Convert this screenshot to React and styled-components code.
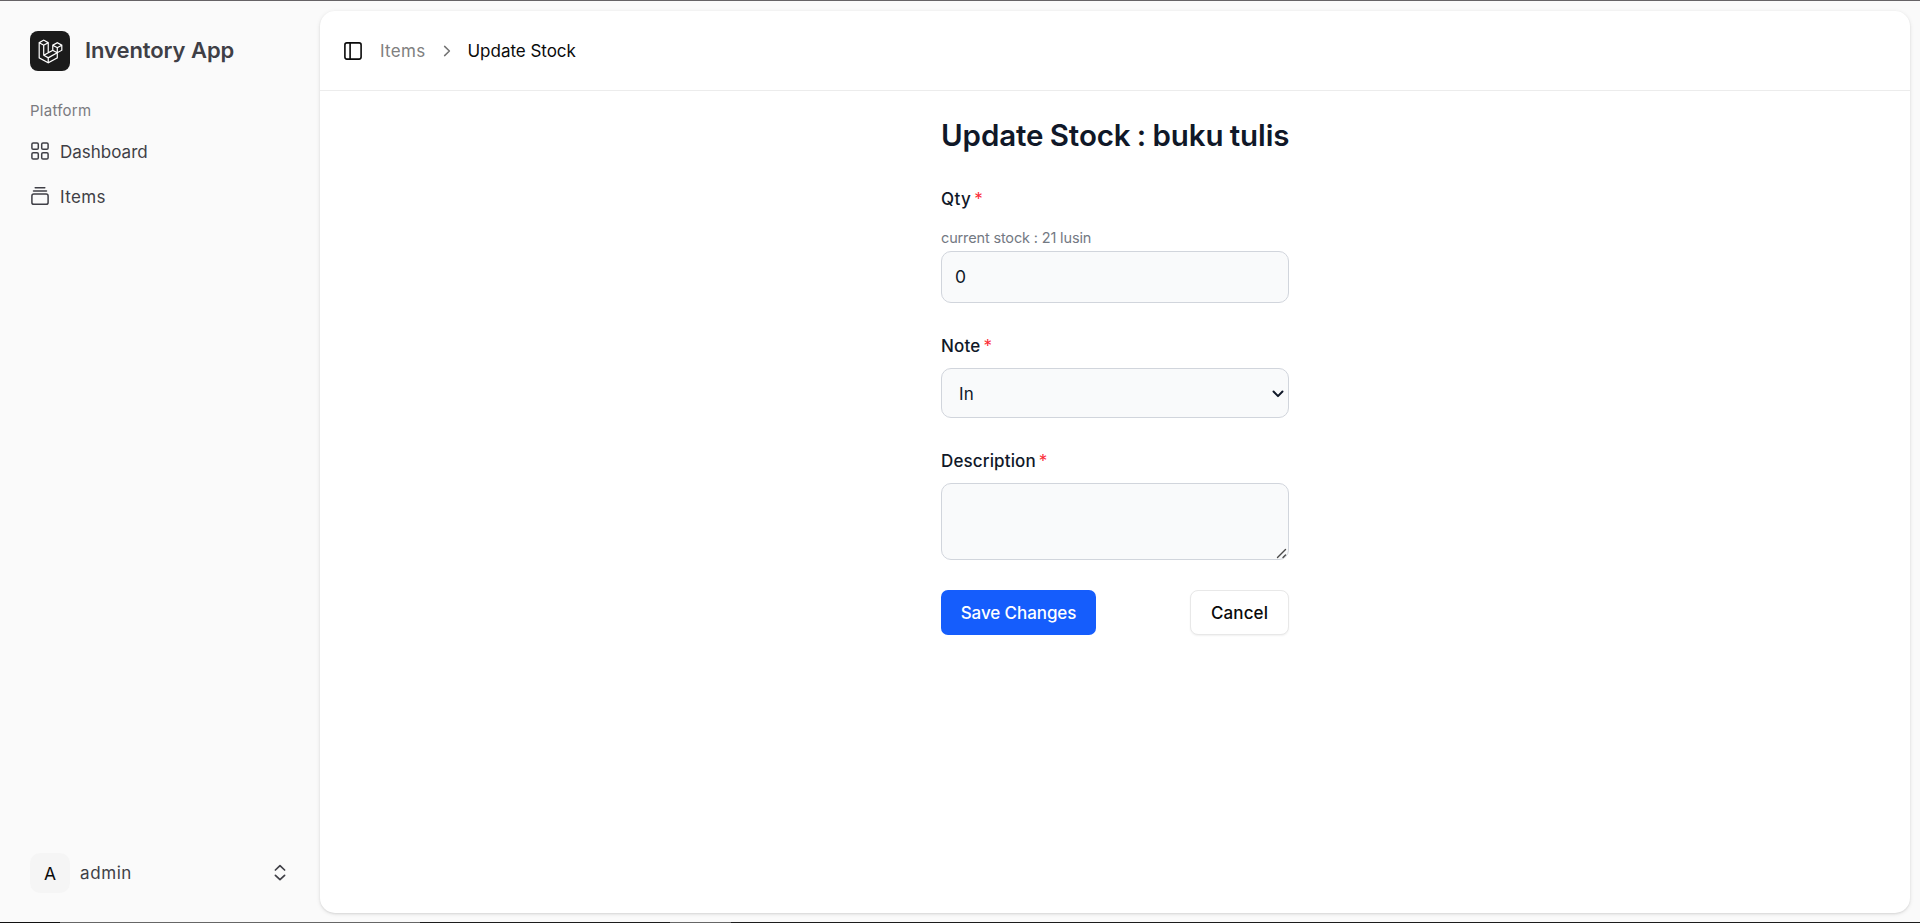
import React from 'react';
import styled, { createGlobalStyle } from 'styled-components';

const GlobalStyle = createGlobalStyle`
  *, *::before, *::after { box-sizing: border-box; }
  html, body { margin: 0; padding: 0; }
  body { background: #fafafa; color: #0a0a0a; font-family: Inter, "Liberation Sans", sans-serif; font-size: 17px; }
  button, input, select, textarea { font: inherit; }
`;

const Page = styled.div`
  height: 100vh;
  display: flex;
  flex-direction: column;
  background: #fafafa;
`;
const TopEdge = styled.div`height: 1px; flex: none; background: #666366;`;
const BottomEdge = styled.div`
  height: 1px;
  flex: none;
  background: linear-gradient(to right, #111 60px, #666 60px 420px, #1c1c1c 420px 670px, #666 670px 731px, #1c1c1c 731px);
`;
const Shell = styled.div`flex: 1; min-height: 0; display: flex;`;

const Text = styled.span`
  font-size: ${p => p.$size || 17}px;
  font-weight: ${p => p.$weight || 400};
  letter-spacing: ${p => p.$track || 0}px;
  color: ${p => p.$color || 'inherit'};
  white-space: nowrap;
`;

const Sidebar = styled.aside`
  width: 320px;
  display: flex;
  flex-direction: column;
  padding: 30px 30px 29px;
`;
const Brand = styled.a`display: flex; align-items: center; gap: 15px; height: 40px; line-height: 26px;
  & > ${Text} { padding-bottom: 2px; }
`;
const LogoBox = styled.span`
  width: 40px;
  height: 40px;
  border-radius: 8px;
  background: #1b1b1b;
  display: grid;
  place-items: center;
`;
const Group = styled.div`height: 40px; margin-top: 20px; padding-bottom: 2px; display: flex; align-items: center;`;
const NavList = styled.nav`display: flex; flex-direction: column; gap: 5px;`;
const NavItem = styled.a`height: 40px; display: flex; align-items: center; gap: 10px; color: #3f3f46;
  & > ${Text} { padding-top: 2px; }
`;
const UserButton = styled.div`
  margin-top: auto;
  height: 40px;
  display: flex;
  align-items: center;
  gap: 10px;
  color: #3f3f46;
`;
const Avatar = styled.span`
  width: 40px;
  height: 40px;
  border-radius: 10px;
  background: #f5f5f5;
  display: grid;
  place-items: center;
  color: #0a0a0a;
`;
const PushRight = styled.span`margin-left: auto; display: flex;`;

const Panel = styled.main`
  flex: 1;
  margin: 10px 10px 9px 0;
  background: #fff;
  border-radius: 15px;
  box-shadow: 0 1px 4px rgba(0, 0, 0, 0.1), 0 1px 2px rgba(0, 0, 0, 0.08);
`;
const Header = styled.header`
  height: 80px;
  border-bottom: 1px solid #ececec;
  padding: 0 23px;
  display: flex;
  align-items: center;
`;
const Crumbs = styled.div`display: flex; align-items: center; margin-left: 17px; gap: 11px;`;
const Separator = styled.span`display: flex; color: #737373;`;

const Form = styled.form`width: 348px; margin: 25px auto 0; display: flex; flex-direction: column;`;
const Title = styled.h1`
  margin: 0;
  height: 40px;
  line-height: 38px;
  font-size: 29.5px;
  font-weight: 600;
  letter-spacing: -0.1px;
  word-spacing: -1px;
  color: #101828;
  white-space: nowrap;
`;
const Field = styled.div`display: flex; flex-direction: column; margin-top: 30px;`;
const Label = styled.label`height: 25px; display: flex; align-items: center; gap: 3px; color: #101828; margin-bottom: 10px;`;
const Hint = styled.div`height: 20px; line-height: 20px; margin: 6px 0 4px;`;
const controlStyle = `
  display: block;
  width: 100%;
  margin: 0;
  border: 1px solid #d1d5dc;
  border-radius: 10px;
  background: #f9fafb;
  color: #101828;
  font-size: 17px;
  outline: none;
  appearance: none;
`;
const Input = styled.input`${controlStyle} height: 52px; padding: 0 13px 2px; font-size: 17.5px;`;
const Select = styled.select`${controlStyle} height: 50px; padding: 2px 17px 0; letter-spacing: 0.3px;`;
const TextArea = styled.textarea`${controlStyle} height: 77px; resize: none;`;
const Control = styled.div`position: relative;`;
const Adornment = styled.span`
  position: absolute;
  right: ${p => p.$right}px;
  bottom: ${p => p.$bottom}px;
  display: flex;
  color: ${p => p.$color};
  pointer-events: none;
`;
const Actions = styled.div`display: flex; justify-content: space-between; margin-top: 30px;`;
const Button = styled.button`
  width: ${p => p.$width}px;
  height: 45px;
  padding: 0;
  border-radius: ${p => (p.$primary ? 7 : 8)}px;
  border: ${p => (p.$primary ? '0' : '1px solid #e8e8e8')};
  background: ${p => (p.$primary ? '#155dfc' : '#fff')};
  color: ${p => (p.$primary ? '#fff' : '#0a0a0a')};
  box-shadow: ${p => (p.$primary ? 'none' : '0 1px 2px rgba(0,0,0,.06)')};
`;

const Icon = ({ size = 20, width = 1.5, children }) => (
  <svg width={size} height={size} viewBox={`0 0 ${size} ${size}`} fill="none" stroke="currentColor" strokeWidth={width} strokeLinecap="round" strokeLinejoin="round">
    {children}
  </svg>
);

const Logo = () => (
  <svg width="25" height="25" viewBox="0 0 40 42" fill="#fff">
    <path fillRule="evenodd" clipRule="evenodd" d="M17.2 5.633 8.6.855 0 5.633v26.51l16.2 9 16.2-9v-8.442l7.6-4.223V9.856l-8.6-4.777-8.6 4.777V18.3l-5.6 3.111V5.633ZM38 18.301l-5.6 3.11v-6.157l5.6-3.11V18.3Zm-1.06-7.856-5.54 3.078-5.54-3.079 5.54-3.078 5.54 3.079ZM24.8 18.3v-6.157l5.6 3.111v6.158L24.8 18.3Zm-1 1.732 5.54 3.078-13.14 7.302-5.54-3.078 13.14-7.3v-.002Zm-16.2 7.89 7.6 4.222V38.3L2 30.966V7.92l5.6 3.111v16.892ZM8.6 9.3 3.06 6.222 8.6 3.143l5.54 3.08L8.6 9.3Zm21.8 15.51-13.2 7.334V38.3l13.2-7.334v-6.156ZM9.6 11.034l5.6-3.11v14.6l-5.6 3.11v-14.6Z" />
  </svg>
);

const Required = () => <Text $color="#fb2c36">*</Text>;

export default function App() {
  return (
    <Page>
      <GlobalStyle />
      <TopEdge />
      <Shell>
        <Sidebar>
          <Brand>
            <LogoBox><Logo /></LogoBox>
            <Text $size={22} $weight={600} $track={-0.07} $color="#3f3f46">Inventory App</Text>
          </Brand>
          <Group><Text $size={15} $track={0.25} $color="#7b7b80">Platform</Text></Group>
          <NavList>
            <NavItem>
              <Icon>
                <rect x="1.9" y="1.9" width="6.4" height="6.4" rx="1.3" />
                <rect x="11.7" y="1.9" width="6.4" height="6.4" rx="1.3" />
                <rect x="1.9" y="11.7" width="6.4" height="6.4" rx="1.3" />
                <rect x="11.7" y="11.7" width="6.4" height="6.4" rx="1.3" />
              </Icon>
              <Text>Dashboard</Text>
            </NavItem>
            <NavItem>
              <Icon>
                <path d="M5.2 1.7h9.6M3.5 4.9h13" />
                <rect x="1.9" y="8.1" width="16.2" height="10.2" rx="1.9" />
              </Icon>
              <Text $track={0.35}>Items</Text>
            </NavItem>
          </NavList>
          <UserButton>
            <Avatar><Text $size={17.5}>A</Text></Avatar>
            <Text $track={0.6}>admin</Text>
            <PushRight>
              <Icon width={1.7}><path d="M5.4 7 10 2.7 14.6 7M5.4 12.3l4.6 4.4 4.6-4.4" /></Icon>
            </PushRight>
          </UserButton>
        </Sidebar>
        <Panel>
          <Header>
            <Icon width={1.6}>
              <rect x="1.9" y="1.9" width="16.2" height="16.2" rx="2" />
              <path d="M7.1 2v16" />
            </Icon>
            <Crumbs>
              <Text $track={0.3} $color="#808080">Items</Text>
              <Separator><Icon><path d="m7.6 5.4 4.8 4.6-4.8 4.6" /></Icon></Separator>
              <Text $track={-0.03}>Update Stock</Text>
            </Crumbs>
          </Header>
          <Form onSubmit={e => e.preventDefault()}>
            <Title>Update Stock : buku tulis</Title>
            <Field>
              <Label><Text $weight={500} $track={0.4}>Qty</Text><Required /></Label>
              <Hint><Text $size={14.5} $track={-0.15} $color="#737983">current stock : 21 lusin</Text></Hint>
              <Input defaultValue="0" />
            </Field>
            <Field>
              <Label><Text $weight={500} $track={0.2}>Note</Text><Required /></Label>
              <Control>
                <Select defaultValue="In"><option>In</option><option>Out</option></Select>
                <Adornment $right={4} $bottom={17} $color="#101828">
                  <Icon size={14} width={2}><path d="m2.5 4.5 4.5 4.6 4.5-4.6" /></Icon>
                </Adornment>
              </Control>
            </Field>
            <Field>
              <Label><Text $weight={500} $track={0.13}>Description</Text><Required /></Label>
              <Control>
                <TextArea />
                <Adornment $right={2} $bottom={1} $color="#4a4a4a">
                  <Icon size={11} width={1.4}><path d="m1.5 9.5 8-8M7 9.5 9.5 7" /></Icon>
                </Adornment>
              </Control>
            </Field>
            <Actions>
              <Button $primary $width={155}><Text $weight={500} $track={-0.08}>Save Changes</Text></Button>
              <Button type="button" $width={99}><Text $weight={500} $track={0.1}>Cancel</Text></Button>
            </Actions>
          </Form>
        </Panel>
      </Shell>
      <BottomEdge />
    </Page>
  );
}
